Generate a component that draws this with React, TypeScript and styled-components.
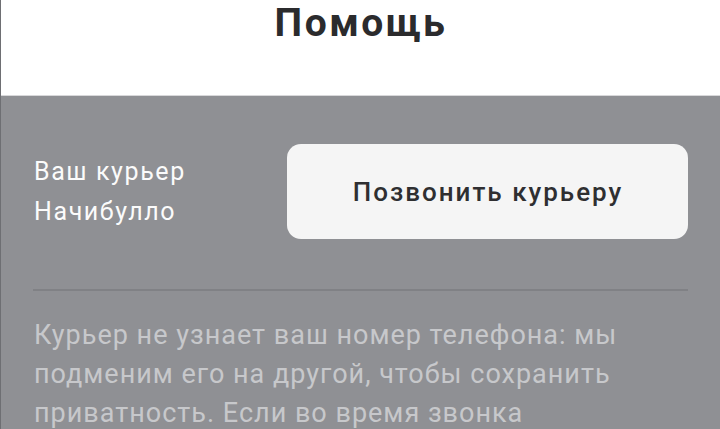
import React from "react";
import styled, { createGlobalStyle } from "styled-components";

const Global = createGlobalStyle`
  html, body { margin: 0; padding: 0; }
  body { font-family: Roboto, "Noto Sans", sans-serif; background: #8f9094; }
`;

const Page = styled.div`
  width: 720px;
  height: 429px;
  overflow: hidden;
  border-left: 1px solid #6e6f73;
  box-sizing: border-box;
  display: flex;
  flex-direction: column;
`;

const Header = styled.header`
  height: 96px;
  flex: none;
  background: #ffffff;
  border-bottom: 1px solid #d8d8da;
  box-sizing: border-box;
  display: flex;
  justify-content: center;
`;

const Title = styled.h1`
  margin: 0;
  padding-left: 1px;
  font-size: 39px;
  font-weight: 700;
  letter-spacing: 2.5px;
  line-height: normal;
  color: #2b2b2d;
`;

const Sheet = styled.section`
  flex: 1;
  background: #8f9094;
  padding: 48px 32px 0 33px;
  display: flex;
  flex-direction: column;
`;

const CourierRow = styled.div`
  display: flex;
  align-items: center;
  justify-content: space-between;
`;

const CourierName = styled.div`
  font-size: 25px;
  letter-spacing: 1.6px;
  line-height: 40px;
  color: #fbfbfb;
`;

const CallButton = styled.button`
  width: 401px;
  height: 95px;
  border: none;
  border-radius: 14px;
  background: #f5f5f5;
  color: #2f2f31;
  font-family: Roboto, "Noto Sans", sans-serif;
  font-size: 26px;
  font-weight: 500;
  letter-spacing: 2px;
  padding: 0 0 0 1px;
  cursor: pointer;
`;

const Divider = styled.hr`
  margin: 50px 0 0 -1px;
  border: none;
  height: 2px;
  background: #808185;
`;

const Note = styled.p`
  margin: 25px 0 0 0;
  font-size: 27px;
  letter-spacing: 1px;
  line-height: 39px;
  color: #c7c8cb;
`;

export default function App() {
  return (
    <>
      <Global />
      <Page>
        <Header>
          <Title>Помощь</Title>
        </Header>
        <Sheet>
          <CourierRow>
            <CourierName>
              Ваш курьер
              <br />
              Начибулло
            </CourierName>
            <CallButton>Позвонить курьеру</CallButton>
          </CourierRow>
          <Divider />
          <Note>
            Курьер не узнает ваш номер телефона: мы подменим его на другой,
            чтобы сохранить приватность. Если во время звонка понадобится
            помощь, напишите нам в поддержку.
          </Note>
        </Sheet>
      </Page>
    </>
  );
}
